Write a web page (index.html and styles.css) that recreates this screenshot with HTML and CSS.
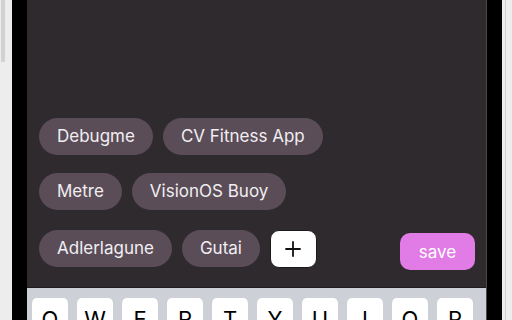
FILE: index.html
```html
<!DOCTYPE html>
<html lang="en">
<head>
  <meta charset="UTF-8" />
  <meta name="viewport" content="width=device-width, initial-scale=1.0" />
  <title>Tags</title>
  <link rel="stylesheet" href="styles.css">
</head>
<body>
  <div class="device">
    <div class="edge edge-left"><div class="side-button"></div></div>
    <div class="bezel">
      <div class="screen">
        <div class="tags">
          <div class="tag-row">
            <span class="tag">Debugme</span>
            <span class="tag">CV Fitness App</span>
          </div>
          <div class="tag-row">
            <span class="tag">Metre</span>
            <span class="tag">VisionOS Buoy</span>
          </div>
          <div class="tag-row">
            <span class="tag">Adlerlagune</span>
            <span class="tag">Gutai</span>
            <button class="add-tag" aria-label="Add tag">
              <svg width="16" height="16" viewBox="0 0 16 16"><path d="M8 1v14M1 8h14" stroke="#111" stroke-width="1.8" stroke-linecap="round"/></svg>
            </button>
            <button class="save">save</button>
          </div>
        </div>
        <div class="keyboard">
          <span class="key">Q</span>
          <span class="key">W</span>
          <span class="key">E</span>
          <span class="key">R</span>
          <span class="key">T</span>
          <span class="key">Y</span>
          <span class="key">U</span>
          <span class="key">I</span>
          <span class="key">O</span>
          <span class="key">P</span>
        </div>
      </div>
    </div>
    <div class="edge edge-right"><div class="edge-line"></div></div>
  </div>
</body>
</html>
```

FILE: styles.css
```css
body {
  margin: 0;
  height: 320px;
  overflow: hidden;
  background-color: #ececec;
  font-family: Inter, "Noto Sans", sans-serif;
}
.device {
  display: flex;
  height: 320px;
}
.edge-left {
  width: 12px;
  background-color: #ededed;
}
.side-button {
  width: 4px;
  height: 62px;
  margin-left: 1px;
  background-color: #d2d2d2;
}
.bezel {
  background-color: #000;
  padding: 0 15px;
}
.screen {
  width: 459px;
  height: 320px;
  background-color: #2f2a2e;
  border-right: 1px solid #4a4a4a;
  display: flex;
  flex-direction: column;
  overflow: hidden;
}
.tags {
  flex: 1;
  display: flex;
  flex-direction: column;
  gap: 18px;
  padding: 118px 11px 0 12px;
}
.tag-row {
  display: flex;
  align-items: flex-start;
  gap: 10px;
}
.tag-row:last-child {
  margin-top: 2px;
}
.tag {
  height: 37px;
  line-height: 37px;
  padding: 0 18px;
  border-radius: 19px;
  background-color: #5a4d58;
  color: #f1eef1;
  font-size: 17px;
}
.add-tag {
  width: 47px;
  height: 38px;
  border: 1px solid #1a1a1a;
  border-radius: 9px;
  background-color: #fff;
  display: flex;
  align-items: center;
  justify-content: center;
  padding: 0;
}
.save {
  margin-left: auto;
  margin-top: 3px;
  width: 75px;
  height: 37px;
  border: none;
  border-radius: 10px;
  background-color: #e17ce6;
  color: #fff;
  font-family: Inter, "Noto Sans", sans-serif;
  font-size: 17px;
  padding: 0;
}
.keyboard {
  box-sizing: border-box;
  flex: 0 0 33px;
  border-top: 1px solid #1e1a1d;
  background-color: #cdd0d6;
  display: flex;
  gap: 9px;
  padding: 10px 0 0 5px;
  overflow: hidden;
}
.key {
  flex: 0 0 36px;
  height: 42px;
  border-radius: 5px;
  background-color: #fff;
  box-shadow: 0 1px 0 #898a8d;
  text-align: center;
  line-height: 42px;
  font-size: 22px;
  color: #000;
}
.edge-right {
  flex: 1;
  background-color: #ededed;
}
.edge-line {
  width: 1px;
  height: 100%;
  margin-left: 3px;
  background-color: #d0d0d0;
}
```
